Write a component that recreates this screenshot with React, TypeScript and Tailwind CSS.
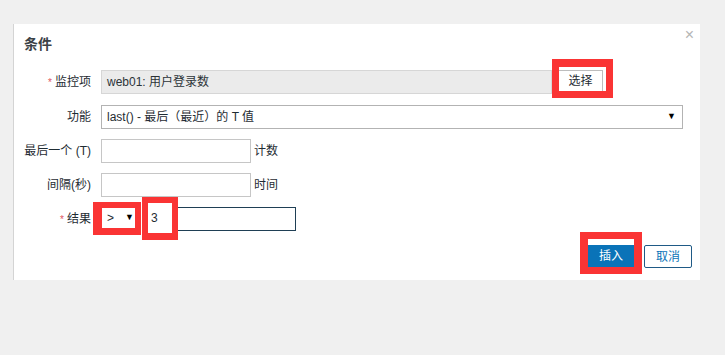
import React from "react";

const font = { fontFamily: '"Liberation Sans", "Noto Sans CJK SC", sans-serif' };

function Label({ text, required }: { text: string; required?: boolean }) {
  return (
    <div className="w-[67px] shrink-0 text-right text-[12px] leading-[24px] text-[#1f2c33]">
      {required && <span className="mr-[3px] text-[10px] text-[#e0555e]">*</span>}
      {text}
    </div>
  );
}

function Row({ children, first }: { children: React.ReactNode; first?: boolean }) {
  return (
    <div className={`flex h-[24px] items-start ${first ? "mb-[11px]" : "mb-[10px]"}`}>{children}</div>
  );
}

export default function App() {
  return (
    <div className="h-[355px] w-[725px] overflow-hidden bg-[#f0f0f0] pt-[24px]" style={font}>
      <div className="relative ml-[13px] h-[256px] w-[687px] border-l border-[#d4d4d4] bg-white pl-[10px] pt-[10px]">
        <button className="absolute right-[6px] top-[3px] text-[16px] leading-none text-[#b5b5b5]">×</button>
        <h2 className="text-[14px] font-bold leading-[20px] text-[#3b4146]">条件</h2>

        <div className="mt-[16px]">
          <Row first>
            <Label text="监控项" required />
            <div className="ml-[10px] flex h-[24px] w-[451px] items-center border border-[#d6d6d6] bg-[#ebebeb] px-[5px] text-[12px] text-[#2c3338]">
              web01: 用户登录数
            </div>
            <div className="-mt-[11px] h-[39px] w-[61px] border-x-[7px] border-b-[7px] border-t-[8px] border-[#fa3434] bg-white">
              <div className="flex h-full pr-[3px] pt-[3px]">
                <div className="flex flex-1 items-center justify-center border-r border-t border-[#bdbdbd] text-[12px] text-[#1f2c33]">
                  选择
                </div>
              </div>
            </div>
          </Row>

          <Row>
            <Label text="功能" />
            <div className="ml-[10px] flex h-[24px] w-[582px] items-center justify-between border border-[#b3b3b3] bg-white pl-[5px] pr-[6px] text-[12px] text-[#1f2c33]">
              <span>last() - 最后（最近）的 T 值</span>
              <span className="text-[9px] text-black">▼</span>
            </div>
          </Row>

          <Row>
            <Label text="最后一个 (T)" />
            <input className="ml-[10px] h-[24px] w-[150px] border border-[#c6c6c6] bg-white outline-none" />
            <span className="ml-[3px] text-[12px] leading-[24px] text-[#1f2c33]">计数</span>
          </Row>

          <Row>
            <Label text="间隔(秒)" />
            <input className="ml-[10px] h-[24px] w-[150px] border border-[#c6c6c6] bg-white outline-none" />
            <span className="ml-[3px] text-[12px] leading-[24px] text-[#1f2c33]">时间</span>
          </Row>

          <Row>
            <Label text="结果" required />
            <div className="ml-[2px] -mt-[5px] flex h-[33px] w-[48px] items-center justify-between border-b-[7px] border-l-[9px] border-r-[6px] border-t-[6px] border-[#fa3434] bg-white pl-[5px] pr-[1px] text-[12px] text-[#1f2c33]">
              <span>&gt;</span>
              <span className="text-[9px] text-black">▼</span>
            </div>
            <div className="ml-[1px] -mt-[10px] flex h-[43px] w-[36px] items-center border-x-[6px] border-b-[7px] border-t-[6px] border-[#fa3434] bg-white pl-[3px] text-[12px] text-[#1f2c33]">
              3
            </div>
            <div className="h-[24px] w-[118px] border-y border-r border-[#1f3f55] bg-white" />
          </Row>
        </div>

        <div className="-mt-[9px] flex items-start justify-end pr-[8px]">
          <div className="h-[42px] w-[62px] border-x-[8px] border-y-[7px] border-[#fa3434] bg-white pt-[6px]">
            <button className="flex h-[22px] w-full items-center justify-center bg-[#0a73b8] text-[12px] text-white">
              插入
            </button>
          </div>
          <button className="ml-[2px] mt-[13px] flex h-[23px] w-[48px] items-center justify-center rounded-[2px] border border-[#1f5a86] bg-white text-[12px] text-[#0a73b8]">
            取消
          </button>
        </div>
      </div>
    </div>
  );
}
